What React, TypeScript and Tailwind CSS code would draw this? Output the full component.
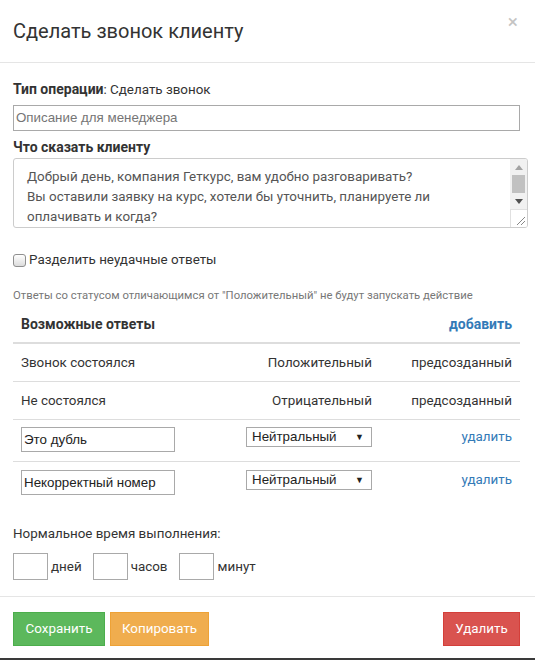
export default function App() {
  const arial = "font-['Liberation_Sans',Arial,sans-serif] text-[13.33px]";
  return (
    <div className="w-[535px] h-[660px] bg-white flex flex-col text-[#333] font-['Roboto',sans-serif] text-[13.4px] leading-[20px] overflow-hidden">
      {/* Header */}
      <div className="h-[63px] shrink-0 border-b border-[#e5e5e5] flex items-center justify-between pl-[13px] pr-[17px]">
        <h4 className="text-[20px] leading-[26px] font-normal">Сделать звонок клиенту</h4>
        <span className="text-[19px] font-normal text-[#c4c4c4] leading-none -mt-[19px]">×</span>
      </div>

      {/* Body */}
      <div className="pl-[13px] pr-[15px] flex flex-col">
        <div className="mt-[16px] h-[20px]">
          <b className="font-bold text-[14px]">Тип операции</b>: Сделать звонок
        </div>
        <div className={`mt-[6px] h-[26px] border border-[#a9a9a9] flex items-center px-[2px] text-[#757575] ${arial}`}>
          Описание для менеджера
        </div>
        <div className="mt-[6px] h-[20px] font-bold text-[14px]">Что сказать клиенту</div>
        <div className="mt-[1px] mr-[-8px] h-[70px] border border-[#ccc] rounded-[3px] flex overflow-hidden">
          <div className="flex-1 pl-[13px] pt-[8px] text-[#555] leading-[20px] overflow-hidden">
            <div>Добрый день, компания Геткурс, вам удобно разговаривать?</div>
            <div>Вы оставили заявку на курс, хотели бы уточнить, планируете ли</div>
            <div>оплачивать и когда?</div>
          </div>
          <div className="w-[17px] flex flex-col bg-[#f1f1f1]">
            <div className="h-[17px] flex items-center justify-center">
              <svg width="8" height="5" viewBox="0 0 8 5"><path d="M0 5 L4 0 L8 5 Z" fill="#a3a3a3" /></svg>
            </div>
            <div className="mx-[2px] h-[18px] bg-[#c1c1c1]" />
            <div className="flex-1" />
            <div className="h-[17px] flex items-center justify-center">
              <svg width="8" height="5" viewBox="0 0 8 5"><path d="M0 0 L8 0 L4 5 Z" fill="#505050" /></svg>
            </div>
            <div className="h-[18px] bg-white border-t border-l border-[#e0e0e0] flex items-end justify-end p-[2px]">
              <svg width="9" height="9" viewBox="0 0 9 9">
                <path d="M1 9 L9 1 M5 9 L9 5" stroke="#888" strokeWidth="1" />
              </svg>
            </div>
          </div>
        </div>

        <div className="mt-[22px] h-[20px] flex items-center">
          <span className="w-[13px] h-[13px] rounded-[3px] border border-[#8f8f8f] bg-gradient-to-b from-white to-[#dcdcdc] shrink-0" />
          <span className="ml-[3px]">Разделить неудачные ответы</span>
        </div>

        <div className="mt-[18px] h-[16px] text-[11.3px] leading-[16px] text-[#777]">
          Ответы со статусом отличающимся от "Положительный" не будут запускать действие
        </div>

        {/* Table */}
        <div className="flex flex-col">
          <div className="h-[40px] pt-[10px] border-b-2 border-[#ddd] flex">
            <div className="flex-1 pl-[8px] font-bold text-[14px]">Возможные ответы</div>
            <div className="w-[140px] pr-[8px] text-right font-bold text-[14px] text-[#337ab7]">добавить</div>
          </div>
          <div className="h-[38px] border-b border-[#ddd] flex items-center">
            <div className="flex-1 pl-[8px]">Звонок состоялся</div>
            <div className="w-[150px] pr-[8px] text-right">Положительный</div>
            <div className="w-[140px] pr-[8px] text-right">предсозданный</div>
          </div>
          <div className="h-[38px] border-b border-[#ddd] flex items-center">
            <div className="flex-1 pl-[8px]">Не состоялся</div>
            <div className="w-[150px] pr-[8px] text-right">Отрицательный</div>
            <div className="w-[140px] pr-[8px] text-right">предсозданный</div>
          </div>
          <div className="h-[42px] border-b border-[#ddd] flex items-start pt-[7px]">
            <div className="flex-1 pl-[8px]">
              <div className={`w-[154px] h-[25px] border border-[#a9a9a9] flex items-center px-[2px] text-[#222] ${arial}`}>Это дубль</div>
            </div>
            <div className="w-[150px] pr-[8px] flex justify-end">
              <div className={`w-[126px] h-[20px] border border-[#a9a9a9] flex items-center justify-between pl-[5px] pr-[7px] text-[#222] ${arial}`}>
                <span>Нейтральный</span>
                <span className="text-[9px] leading-none">▼</span>
              </div>
            </div>
            <div className="w-[140px] pr-[8px] text-right text-[#337ab7]">удалить</div>
          </div>
          <div className="h-[42px] flex items-start pt-[8px]">
            <div className="flex-1 pl-[8px]">
              <div className={`w-[154px] h-[25px] border border-[#a9a9a9] flex items-center px-[2px] text-[#222] ${arial}`}>Некорректный номер</div>
            </div>
            <div className="w-[150px] pr-[8px] flex justify-end">
              <div className={`w-[126px] h-[20px] border border-[#a9a9a9] flex items-center justify-between pl-[5px] pr-[7px] text-[#222] ${arial}`}>
                <span>Нейтральный</span>
                <span className="text-[9px] leading-none">▼</span>
              </div>
            </div>
            <div className="w-[140px] pr-[8px] text-right text-[#337ab7]">удалить</div>
          </div>
        </div>

        <div className="mt-[20px] h-[20px]">Нормальное время выполнения:</div>
        <div className="mt-[9px] h-[27px] flex items-center">
          <div className="w-[35px] h-[27px] border border-[#a9a9a9]" />
          <span className="ml-[3px]">дней</span>
          <div className="ml-[11px] w-[35px] h-[27px] border border-[#a9a9a9]" />
          <span className="ml-[3px]">часов</span>
          <div className="ml-[11px] w-[35px] h-[27px] border border-[#a9a9a9]" />
          <span className="ml-[4px]">минут</span>
        </div>
      </div>

      {/* Footer */}
      <div className="mt-[16px] border-t border-[#e5e5e5] pt-[15px] pl-[13px] pr-[15px] flex items-start">
        <button className="h-[34px] w-[92px] bg-[#5cb85c] border border-[#4cae4c] text-white">Сохранить</button>
        <button className="ml-[5px] h-[34px] w-[99px] bg-[#f0ad4e] border border-[#eea236] text-white">Копировать</button>
        <div className="flex-1" />
        <button className="h-[34px] w-[77px] bg-[#d9534f] border border-[#d43f3a] text-white">Удалить</button>
      </div>
      <div className="flex-1" />
      <div className="h-[2px] bg-[#3a3a3a] shrink-0" />
    </div>
  );
}
